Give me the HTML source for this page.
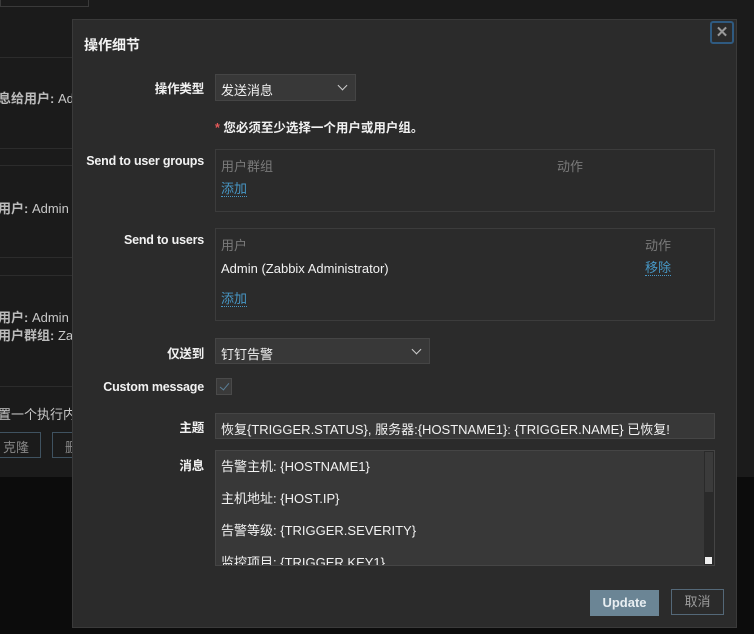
<!DOCTYPE html>
<html><head><meta charset="utf-8"><style>
*{box-sizing:border-box;margin:0;padding:0}
body{width:754px;height:634px;overflow:hidden;background:#0c0c0c;font-family:"Liberation Sans","Noto Sans CJK SC",sans-serif;font-size:13px;color:#f2f2f2;position:relative}
.a{position:absolute}
.bg{left:0;top:0;width:754px;height:477px;background:#1b1b1b}
.bgl{color:#c8c8c8;font-size:13px}
.bgl b{color:#bbb}
.hl{height:1px;background:#2c2c2c;left:0;width:72px}
.dlg{left:72px;top:19px;width:665px;height:609px;background:#2b2b2b;border:1px solid #3a3a3a}
.lbl{right:550px;text-align:right;font-weight:bold;color:#f2f2f2;white-space:nowrap;font-size:12.5px;letter-spacing:-0.2px}
.box{border:1px solid #454545;background:#383838}
.tbl{border:1px solid #3c3c3c}
.gray{color:#7a7a7a}
.lnk{color:#4796c4;border-bottom:1px dotted #4796c4;line-height:14px}
.sel::after{content:"";position:absolute;right:9px;top:7px;width:6px;height:6px;border-right:1px solid #ccc;border-bottom:1px solid #ccc;transform:rotate(45deg)}
</style></head><body>
<div class="a bg"></div>
<div class="a" style="left:0;top:0;width:89px;height:7px;border:1px solid #3a3a3a;border-top:none"></div>
<div class="a hl" style="top:57px"></div>
<div class="a hl" style="top:148px"></div>
<div class="a hl" style="top:165px"></div>
<div class="a hl" style="top:257px"></div>
<div class="a hl" style="top:275px"></div>
<div class="a hl" style="top:386px"></div>
<div class="a bgl" style="left:-2px;top:88px"><b>息给用户:</b> Ad</div>
<div class="a bgl" style="left:-2px;top:198px"><b>用户:</b> Admin</div>
<div class="a bgl" style="left:-2px;top:307px"><b>用户:</b> Admin</div>
<div class="a bgl" style="left:-2px;top:325px"><b>用户群组:</b> Za</div>
<div class="a bgl" style="left:-2px;top:404px">置一个执行内</div>
<div class="a" style="left:-4px;top:432px;width:45px;height:26px;border:1px solid #3f5260;color:#888;padding:4px 0 0 6px">克隆</div>
<div class="a" style="left:52px;top:432px;width:30px;height:26px;border:1px solid #3f5260;color:#888;padding:4px 0 0 12px">删</div>

<div class="a dlg"></div>
<div class="a" style="left:84px;top:35px;font-size:14px;font-weight:bold">操作细节</div>
<div class="a" style="left:710px;top:21px;width:24px;height:23px;border:2px solid #2f5a80;border-radius:3px;color:#999;font-weight:bold;font-size:15px;text-align:center;line-height:19px">✕</div>

<div class="a lbl" style="top:78px">操作类型</div>
<div class="a box sel" style="left:215px;top:74px;width:141px;height:27px;padding:5px 0 0 5px">发送消息</div>
<div class="a" style="left:215px;top:117px;font-weight:bold;font-size:12.5px"><span style="color:#e45959">*</span> 您必须至少选择一个用户或用户组。</div>

<div class="a lbl" style="top:154px">Send to user groups</div>
<div class="a tbl" style="left:215px;top:149px;width:500px;height:63px"></div>
<div class="a gray" style="left:221px;top:156px">用户群组</div>
<div class="a gray" style="left:557px;top:156px">动作</div>
<div class="a lnk" style="left:221px;top:182px">添加</div>

<div class="a lbl" style="top:233px">Send to users</div>
<div class="a tbl" style="left:215px;top:228px;width:500px;height:93px"></div>
<div class="a gray" style="left:221px;top:235px">用户</div>
<div class="a gray" style="left:645px;top:235px">动作</div>
<div class="a" style="left:221px;top:261px">Admin (Zabbix Administrator)</div>
<div class="a lnk" style="left:645px;top:261px">移除</div>
<div class="a lnk" style="left:221px;top:292px">添加</div>

<div class="a lbl" style="top:343px">仅送到</div>
<div class="a box sel" style="left:215px;top:338px;width:215px;height:26px;padding:5px 0 0 5px">钉钉告警</div>

<div class="a lbl" style="top:380px">Custom message</div>
<div class="a" style="left:216px;top:378px;width:16px;height:17px;border:1px solid #4a4a4a;background:#3a3a3a"><div style="position:absolute;left:5px;top:2px;width:5px;height:9px;border-right:1.5px solid #5a7f98;border-bottom:1.5px solid #5a7f98;transform:rotate(40deg)"></div></div>

<div class="a lbl" style="top:417px">主题</div>
<div class="a box" style="left:215px;top:413px;width:500px;height:26px;padding:5px 0 0 5px;white-space:nowrap">恢复{TRIGGER.STATUS}, 服务器:{HOSTNAME1}: {TRIGGER.NAME} 已恢复!</div>

<div class="a lbl" style="top:455px">消息</div>
<div class="a box" style="left:215px;top:450px;width:500px;height:116px;overflow:hidden;padding:0 0 0 5px;line-height:32px">告警主机: {HOSTNAME1}<br>主机地址: {HOST.IP}<br>告警等级: {TRIGGER.SEVERITY}<br>监控项目: {TRIGGER.KEY1}</div>
<div class="a" style="left:704px;top:451px;width:10px;height:114px;background:#2a2a2a"></div>
<div class="a" style="left:705px;top:452px;width:8px;height:40px;background:#3b3b3b"></div>
<div class="a" style="left:705px;top:557px;width:7px;height:7px;background:#eee"></div>

<div class="a" style="left:590px;top:590px;width:69px;height:26px;background:#6b8595;color:#e8eef2;font-weight:bold;text-align:center;line-height:26px">Update</div>
<div class="a" style="left:671px;top:589px;width:53px;height:26px;border:1px solid #546878;color:#9a9a9a;text-align:center;line-height:24px">取消</div>
</body></html>
